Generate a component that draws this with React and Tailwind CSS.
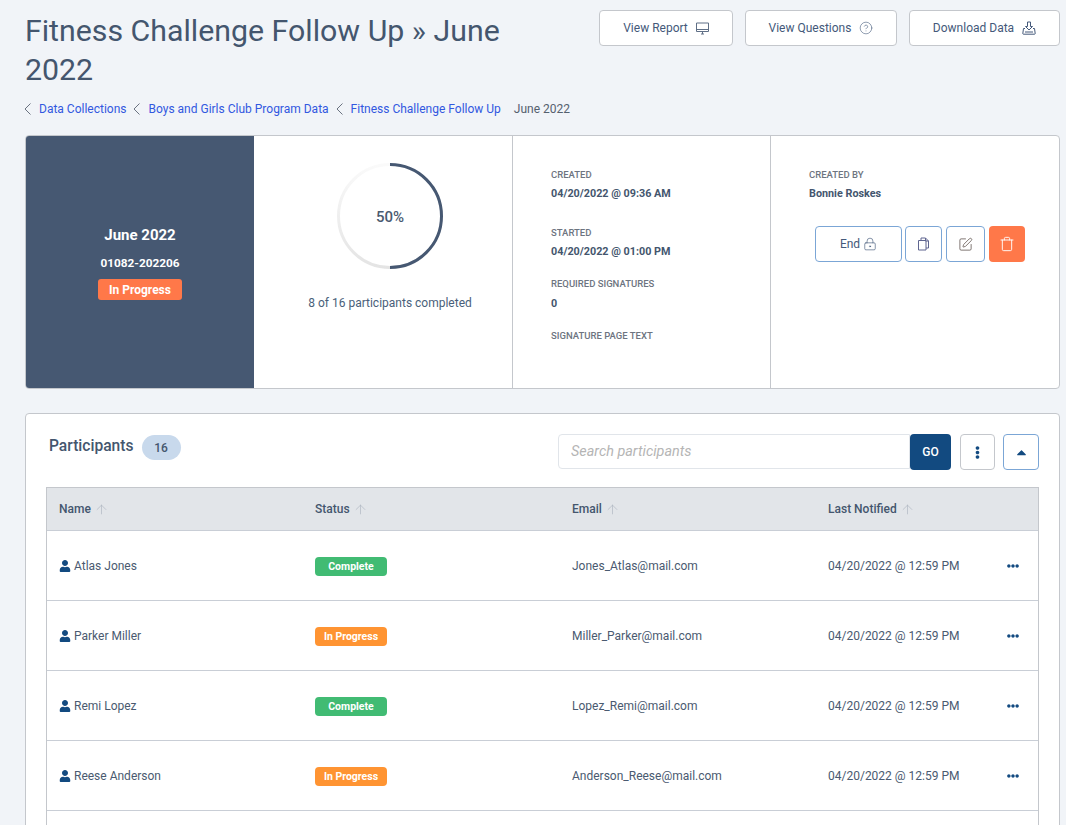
import * as React from "react";
import { ArrowUp, CircleHelp, SquarePen, Trash, LockKeyhole } from "lucide-react";
import { FaUser, FaEllipsisH, FaEllipsisV, FaCaretUp } from "react-icons/fa";

const rows = [
  { name: "Atlas Jones", status: "Complete", email: "Jones_Atlas@mail.com" },
  { name: "Parker Miller", status: "In Progress", email: "Miller_Parker@mail.com" },
  { name: "Remi Lopez", status: "Complete", email: "Lopez_Remi@mail.com" },
  { name: "Reese Anderson", status: "In Progress", email: "Anderson_Reese@mail.com" },
];

function MonitorIcon() {
  return (
    <svg width="13" height="13" viewBox="0 0 13 13" fill="none" stroke="#5f6f86" strokeWidth="1">
      <path d="M.5 1h12v8.5H.5z" />
      <path d="M.5 7.5h12" />
      <path d="M5 12h3M6.5 10v2" />
    </svg>
  );
}

function DownloadTray() {
  return (
    <svg width="14" height="14" viewBox="0 0 14 14" fill="none" stroke="#44597a" strokeWidth="1">
      <path d="M5.5 1h3v4.5h2L7 9 3.5 5.5h2z" />
      <path d="M3 7.5H1.5L.8 12.5c0 .4.2.7.6.7h11.2c.4 0 .6-.3.6-.7l-.7-5H11" />
      <path d="M3 11h8" />
    </svg>
  );
}

function CopyIcon() {
  return (
    <svg width="13" height="14" viewBox="0 0 13 14" fill="none" stroke="#5f6590" strokeWidth="1">
      <path d="M4 3V1h4.5L11.5 4v7H9" />
      <path d="M8.5 1v3h3" />
      <path d="M1.5 3.5H9v9.5H1.5z" />
    </svg>
  );
}

function TopButton({ label, width, children }) {
  return (
    <button
      className={`${width} h-9 flex items-center justify-center gap-2 bg-white border border-[#c4c7cc] rounded text-[12px] text-[#44597a]`}
    >
      {label}
      {children}
    </button>
  );
}

function Crumb({ label }) {
  return (
    <span className="flex items-center">
      <svg width="7" height="12" viewBox="0 0 7 12" fill="none" stroke="#6a7280" strokeWidth="1" className="mr-2">
        <path d="M6.5.5 1 6l5.5 5.5" />
      </svg>
      <span className="text-[#3258e0] mr-[7px]">{label}</span>
    </span>
  );
}

function Info({ label, value, tight, className }) {
  return (
    <div className={className}>
      <div className="text-[9.5px] leading-[14px] font-medium text-[#6d7480] uppercase">{label}</div>
      {value && (
        <div className={`${tight ? "mt-[5px]" : "mt-[6px]"} text-[10.8px] leading-[14px] font-bold text-[#44566e]`}>
          {value}
        </div>
      )}
    </div>
  );
}

function Sort() {
  return <ArrowUp size={15} strokeWidth={1} className="text-[#aab2bd] ml-[3px]" />;
}

function Row({ name, status, email }) {
  return (
    <div className="grid grid-cols-[256px_257px_256px_1fr] h-[70px] pl-3 items-center border-b border-[#c9ced6] text-[12px] text-[#4a5a70]">
      <div className="flex items-center">
        <FaUser size={12} className="text-[#124a80] mr-[3px]" />
        {name}
      </div>
      <div className="mt-[2px]">
        <span
          className={`${status === "Complete" ? "bg-[#41bb73]" : "bg-[#ff9432]"} flex items-center justify-center w-[72px] h-[19px] rounded text-white text-[10.5px] font-bold`}
        >
          {status}
        </span>
      </div>
      <div>{email}</div>
      <div className="flex items-center justify-between pr-[19px]">
        <span>04/20/2022 @ 12:59 PM</span>
        <FaEllipsisH size={12} className="text-[#124a80]" />
      </div>
    </div>
  );
}

export default function App() {
  return (
    <div className="w-[1066px] h-[825px] overflow-hidden bg-[#f1f4f8] pl-[25px] pr-[6px] font-['Roboto',sans-serif]">
      <div className="flex justify-between pt-[10px]">
        <h1 className="w-[500px] pt-[1px] text-[30.3px] leading-[39px] font-normal text-[#44566e]">
          Fitness Challenge Follow Up » June 2022
        </h1>
        <div className="flex gap-3">
          <TopButton label="View Report" width="w-[134px]">
            <MonitorIcon />
          </TopButton>
          <TopButton label="View Questions" width="w-[152px]">
            <CircleHelp size={14} strokeWidth={1} />
          </TopButton>
          <TopButton label="Download Data" width="w-[151px]">
            <DownloadTray />
          </TopButton>
        </div>
      </div>

      <div className="flex items-center h-4 mt-3 -ml-px text-[12px] text-[#55606e]">
        <Crumb label="Data Collections" />
        <Crumb label="Boys and Girls Club Program Data" />
        <Crumb label="Fitness Challenge Follow Up" />
        <span className="ml-1.5">June 2022</span>
      </div>

      <div className="flex h-[254px] mt-[18px] bg-white border border-[#c4c7cc] rounded overflow-hidden">
        <div className="w-[228px] bg-[#465872] pt-[1px] flex flex-col items-center justify-center text-white font-bold">
          <div className="text-[15px] leading-5">June 2022</div>
          <div className="text-[11.8px] leading-4 mt-[10px]">01082-202206</div>
          <div className="mt-2 w-[84px] h-[21px] bg-[#ff7849] rounded-[3px] flex items-center justify-center text-[12px]">
            In Progress
          </div>
        </div>
        <div className="w-[259px] border-r border-[#c4c7cc] flex flex-col items-center pl-[14px] pt-[27px]">
          <div className="relative w-[106px] h-[106px]">
            <svg width="106" height="106" viewBox="0 0 106 106">
              <defs>
                <linearGradient id="ringTrack" x1="0" y1="0" x2="0" y2="1">
                  <stop offset="0" stopColor="#fafafa" />
                  <stop offset="1" stopColor="#e4e4e4" />
                </linearGradient>
              </defs>
              <circle cx="53" cy="53" r="51.5" fill="none" stroke="url(#ringTrack)" strokeWidth="3" />
              <path d="M53 1.5a51.5 51.5 0 0 1 0 103" fill="none" stroke="#465872" strokeWidth="3" />
            </svg>
            <div className="absolute inset-0 pt-[2px] flex items-center justify-center text-[15px] font-medium text-[#4a5a70]">
              50%
            </div>
          </div>
          <div className="mt-[26px] text-[12px] leading-4 text-[#4a5f7a]">8 of 16 participants completed</div>
        </div>
        <div className="w-[258px] border-r border-[#c4c7cc] pl-[38px] pt-[32px]">
          <Info label="Created" value="04/20/2022 @ 09:36 AM" tight />
          <Info label="Started" value="04/20/2022 @ 01:00 PM" tight className="mt-[25px]" />
          <Info label="Required Signatures" value="0" className="mt-[18px]" />
          <Info label="Signature Page Text" className="mt-[18px]" />
        </div>
        <div className="flex-1 pt-[32px]">
          <Info label="Created By" value="Bonnie Roskes" tight className="pl-[38px]" />
          <div className="flex gap-[3px] ml-[44px] mt-[25px]">
            <button className="w-[87px] h-9 flex items-center justify-center gap-[3px] border border-[#7ba6d6] rounded text-[12px] text-[#44597a]">
              End
              <LockKeyhole size={14} strokeWidth={1.1} />
            </button>
            <button className="w-[37px] h-9 flex items-center justify-center border border-[#7ba6d6] rounded">
              <CopyIcon />
            </button>
            <button className="w-[39px] h-9 ml-[1px] flex items-center justify-center border border-[#7ba6d6] rounded text-[#655a55]">
              <SquarePen size={15} strokeWidth={1.3} />
            </button>
            <button className="w-9 h-9 ml-[1px] flex items-center justify-center bg-[#ff7849] rounded text-white">
              <Trash size={16} strokeWidth={1.4} />
            </button>
          </div>
        </div>
      </div>

      <div className="mt-6 bg-white border border-[#c4c7cc] rounded-t pl-5 pr-5 pb-10">
        <div className="flex items-center h-[73px] pt-[3px]">
          <div className="flex items-center flex-1 pl-[3px] pb-[9px]">
            <span className="text-[15.6px] mb-[1px] font-medium text-[#44566e]">Participants</span>
            <span className="ml-2 w-[39px] h-[25px] rounded-full bg-[#c8d9ec] flex items-center justify-center text-[12px] font-medium text-[#44566e]">
              16
            </span>
          </div>
          <div className="flex items-center">
            <input
              placeholder="Search participants"
              className="w-[352px] h-[35px] mb-[1px] px-3 border border-[#e1e5ea] rounded-l text-[14.4px] italic placeholder:text-[#b5b5b5] outline-none"
            />
            <button className="w-[41px] h-9 bg-[#124a80] rounded text-white text-[12px] font-medium">GO</button>
            <button className="w-[35px] h-9 ml-[9px] flex items-center justify-center border border-[#c4c7cc] rounded text-[#124a80]">
              <FaEllipsisV size={13} />
            </button>
            <button className="w-[36px] h-9 ml-2 flex items-center justify-center border border-[#7ba6d6] rounded text-[#124a80]">
              <FaCaretUp size={15} />
            </button>
          </div>
        </div>
        <div className="border-x border-t border-[#c4c7cc]">
          <div className="grid grid-cols-[256px_257px_256px_1fr] h-[43px] pl-3 items-center bg-[#e2e5e9] border-b border-[#c9ced6] text-[12px] font-medium text-[#44566e]">
            <div className="flex items-center">Name<Sort /></div>
            <div className="flex items-center">Status<Sort /></div>
            <div className="flex items-center">Email<Sort /></div>
            <div className="flex items-center">Last Notified<Sort /></div>
          </div>
          {rows.map((r, key) => (
            <Row key={key} {...r} />
          ))}
          <div className="h-10" />
        </div>
      </div>
    </div>
  );
}
